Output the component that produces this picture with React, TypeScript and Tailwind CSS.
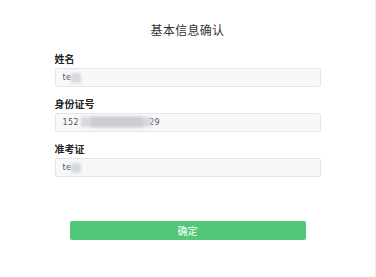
import React from "react";

const font = { fontFamily: '"Noto Sans CJK SC", "Liberation Sans", sans-serif' };

function Blur({ w, dark }: { w: number; dark?: boolean }) {
  return (
    <span className="relative inline-block h-[10px] align-middle" style={{ width: w }}>
      <span className="absolute inset-0 bg-[#d6d8db] blur-[1.5px]" />
      {dark ? <span className="absolute inset-y-0 left-[10px] right-[8px] bg-[#cbcdd0] blur-[1.5px]" /> : null}
    </span>
  );
}

function Field({ label, children }: { label: string; children: React.ReactNode }) {
  return (
    <div className="flex flex-col">
      <div className="h-[14px] text-[10px] leading-[14px] font-bold text-[#222]">{label}</div>
      <div className="mt-[2px] flex h-[19px] items-center rounded-[2px] border border-[#e4e6e9] bg-[#f7f8fa] pl-[7px] text-[8px] tracking-[0.4px] text-[#555]" style={{ fontFamily: '"DejaVu Sans", "Liberation Sans", sans-serif' }}>
        {children}
      </div>
    </div>
  );
}

export default function App() {
  return (
    <div className="flex h-[277px] w-[376px] bg-white" style={font}>
      <div className="flex flex-1 justify-center">
        <div className="flex w-[266px] flex-col pt-[22px]">
          <div className="h-[16px] text-center text-[12px] leading-[16px] tracking-[0.3px] text-[#333]">基本信息确认</div>
          <div className="mt-[14px] flex flex-col gap-[10px]">
            <Field label="姓名">
              <span>te</span>
              <Blur w={10} />
            </Field>
            <Field label="身份证号">
              <span>152</span>
              <span className="ml-[2px]"><Blur w={70} dark /></span>
              <span className="-ml-[2px]">29</span>
            </Field>
            <Field label="准考证">
              <span>te</span>
              <Blur w={10} />
            </Field>
          </div>
          <div className="mt-[44px] flex justify-center">
            <div className="flex h-[19px] w-[236px] items-center justify-center rounded-[2px] bg-[#50c878] text-[10px] text-white">确定</div>
          </div>
        </div>
      </div>
      <div className="w-px bg-[#ececec]" />
    </div>
  );
}
